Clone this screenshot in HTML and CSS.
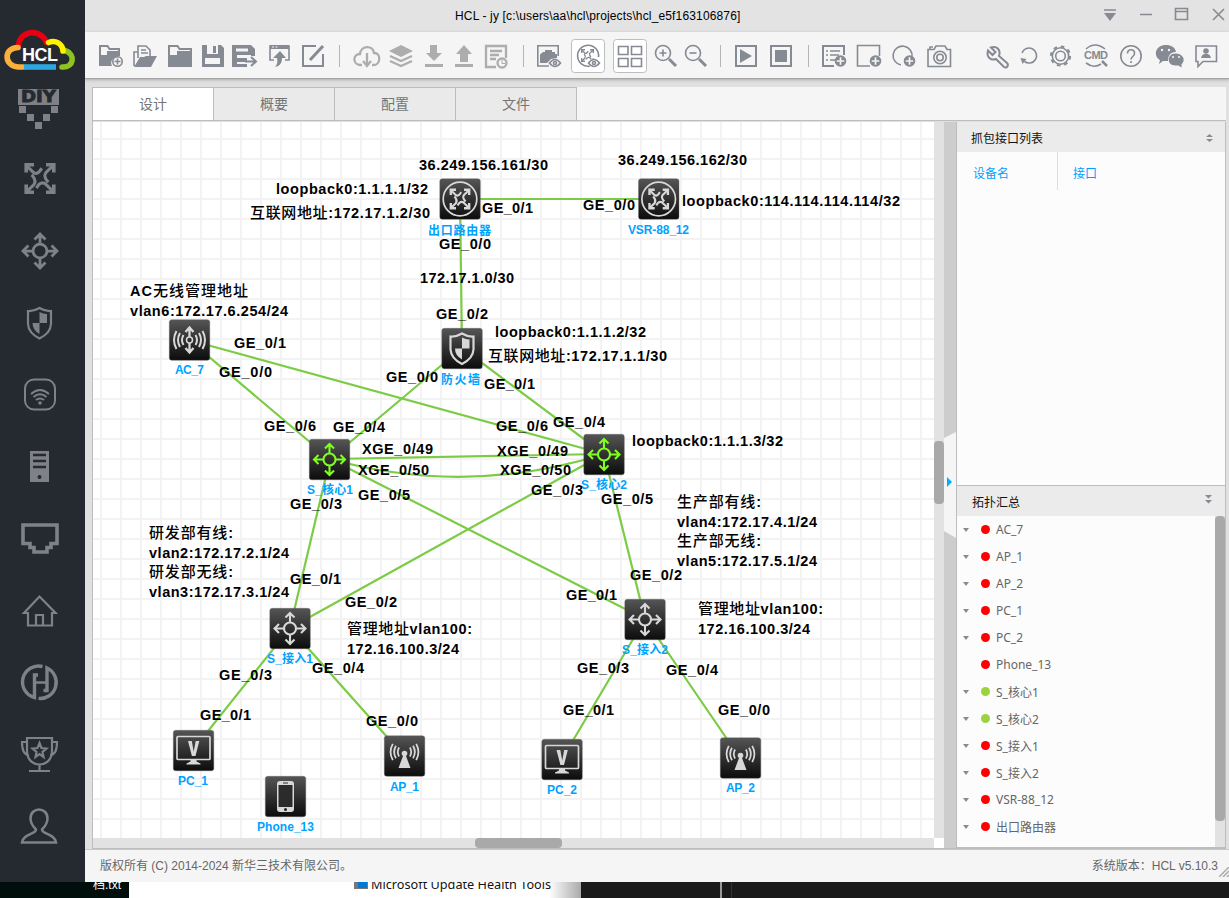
FILE: index.html
```html
<!DOCTYPE html>
<html lang="zh-CN">
<head>
<meta charset="utf-8">
<title>HCL - jy</title>
<link rel="stylesheet" href="styles.css">
</head>
<body>
<div class="screen">
<div class="app">
  <nav class="side">
    <svg class="logo" viewBox="0 0 85 72">
      <g fill="none" stroke-width="5.600" stroke-linecap="round">
        <path d="M62 67c12 1 14-13 3-16.500" stroke="#8fc31f"/>
        <path d="M18.500 45.500c1-15 22-18 28-3" stroke="#e60012"/>
        <path d="M23 67h-5C4 66 3 48 18 47.500" stroke="#fbb03b"/>
        <path d="M24 67h32" stroke="#2ea7e0" stroke-linecap="butt"/>
        <path d="M48.500 42.500c7-3 14 1 14.500 8.500" stroke="#fff100"/>
      </g>
      <text x="22" y="61" class="logo-t" textLength="36">HCL</text>
    </svg>
    <svg class="si" viewBox="0 72 85 72"><path fill="#7f8186" d="M18 89h41v16H18zM19 106h7v7h-7zM51 106h7v7h-7zM27 114h7v7h-7zM43 114h7v7h-7zM35 122h7v7h-7z"/><text class="diy" x="21" y="102" textLength="35" lengthAdjust="spacingAndGlyphs">DIY</text></svg>
    <svg class="si" viewBox="0 144 85 72"><g transform="translate(40 178.500) scale(1.2)"><use class="thick" href="#router"/></g></svg>
    <svg class="si" viewBox="0 216 85 72"><g transform="translate(40 251) scale(1.1)"><use href="#switch2"/></g></svg>
    <svg class="si" viewBox="0 288 85 72"><g transform="translate(39.500 323)"><use href="#shield"/></g></svg>
    <svg class="si" viewBox="0 360 85 72"><g fill="none" stroke="#7f8186" stroke-width="2"><rect x="25" y="379.500" width="30" height="30" rx="9"/><path d="M31 394q9-8 18 0M33.500 397q6.500-5.500 13 0M36 400q4-3 8 0"/></g><circle cx="40" cy="403" r="1.800" fill="#7f8186"/></svg>
    <svg class="si" viewBox="0 432 85 72"><path fill="#7f8186" d="M30 451h19v31H30z"/><path stroke="#252a31" stroke-width="2.300" d="M33 455h13M33 461h13M33 467h13"/><circle cx="39.500" cy="477" r="2" fill="#252a31"/></svg>
    <svg class="si" viewBox="0 504 85 72"><path fill="none" stroke="#7f8186" stroke-width="3.600" d="M23 525h34v18.500h-6v4h-4v4.500H34v-4.500h-4v-4h-7z"/></svg>
    <svg class="si" viewBox="0 576 85 72"><g fill="none" stroke="#7f8186" stroke-width="2.200"><path d="M28 625.500h24V613h3.500L39.500 596.500 24 613h4z"/><path d="M36 625v-10h7v10"/></g></svg>
    <svg class="si" viewBox="0 648 85 72"><g fill="none" stroke="#7f8186" stroke-width="3.400"><path d="M42.500 666.500A16 16 0 0 0 34.500 697.500V675h3.500M38.500 698.400A16 16 0 0 0 47 668V690.500h-3.500"/><path d="M35 682.500h12" stroke-width="2.500"/></g></svg>
    <svg class="si" viewBox="0 720 85 72"><g fill="none" stroke="#7f8186" stroke-width="2.200"><path d="M27 738h25v13c0 18-25 18-25 0zM27 742h-5c0 8 2 13 7 13M52 742h5c0 8-2 13-7 13M39.500 765v5M29 771h21"/><path d="m39.500 743 2 5 5 .5-4 3.500 1 5-4-3-4 3 1-5-4-3.500 5-.5z"/></g></svg>
    <svg class="si" viewBox="0 792 85 72"><path fill="none" stroke="#7f8186" stroke-width="2.500" d="M22 842.500h34c-1-9-14-8-14-13 3-3 5.500-6 5.500-11 0-12-17-12-17 0 0 5 2.500 8 5.500 11 0 5-13 4-14 13z"/></svg>
  </nav>

  <div class="main">
    <header class="title">
      <span class="title-text">HCL - jy [c:\users\aa\hcl\projects\hcl_e5f163106876]</span>
      <svg class="win" viewBox="1099 0 130 32"><g fill="none" stroke="#868a93" stroke-width="1.600"><path d="M1104 10h12M1140 14.500h12M1175.500 8.500h12v11h-12zM1175 11.500h12"/><path d="m1213 9 11 11M1224 9l-11 11"/></g><path fill="#868a93" d="M1104 13h12l-6 8z"/></svg>
    </header>

    <div class="tools">
      <svg width="45" height="46" viewBox="85 32 45 46"><path fill="#868a93" d="M99 45h9l2 3h10v8l-3 1a6 6 0 0 0-5 9H99z"/><path fill="#f5f5f5" d="M101 47h6l2 3h9v1H107v4h-6z"/><circle cx="117.500" cy="61.500" r="4.700" class="o"/><path class="o" d="M114.500 61.500h6M117.500 58.500v6"/></svg>
      <svg width="33" height="46" viewBox="130 32 33 46"><path class="o" d="M138 52h-4v14M138 58V46h8l4 4v7M141 50h5M141 53h7"/><path fill="#868a93" d="M134 67l6-10h4l2-1h11l-6 11z"/></svg>
      <svg width="34" height="46" viewBox="163 32 34 46"><path fill="#868a93" d="M168 45h10l2 3h12v19h-24z"/><path fill="#f5f5f5" d="M170 47h7l2 3h11v1H177v4h-7z"/></svg>
      <svg width="32" height="46" viewBox="197 32 32 46"><path fill="#868a93" d="M202 45h5v9h11v-9h3l3 3v19h-22zM213 46h3v7h-3z"/><path fill="#f5f5f5" d="M205 58h15v6h-15z"/></svg>
      <svg width="34" height="46" viewBox="229 32 34 46"><path fill="#868a93" d="M232 45h19l4 4v7h-4v-1h-14v3h10v4h-10v2h10v3h-15z"/><path fill="#f5f5f5" d="M236 48.500h12v3h-12z"/><path class="o w2" d="M245 61.500h10M251 57l5 4.500-5 4.500"/></svg>
      <svg width="33" height="46" viewBox="263 32 33 46"><path class="o" d="M274 60h-4V46h19v14h-4"/><path fill="#868a93" d="M270 45h19v4h-19zM280 51l6 7h-4c0 5-2 8-7 9 2-2 3-5 2-9h-4z"/><path stroke="#f5f5f5" d="M272 47h2M275.500 47h2"/></svg>
      <svg width="37" height="46" viewBox="296 32 37 46"><path class="o w2" d="M316 46h-13v20h20V54"/><path stroke="#868a93" stroke-width="3" d="M310 60l13-14"/></svg>
      <svg width="14" height="46" viewBox="333 32 14 46"><path class="sep" d="M339.500 45v22"/></svg>
      <svg width="38" height="46" viewBox="347 32 38 46"><g class="dis"><path d="M362 65h-2c-8-1-7-11 0-11 1-9 13-9 14-1 8 0 6 12 0 12h-2M367 53v12M363 61l4 5 4-5"/></g></svg>
      <svg width="34" height="46" viewBox="385 32 34 46"><path fill="#adadad" d="m401 45 12 6-12 6-12-6z"/><path class="dis" d="m390 56 11 5 11-5M390 61l11 5 11-5"/></svg>
      <svg width="30" height="46" viewBox="419 32 30 46"><path fill="#adadad" d="M430 45h7v8h5l-8 8-8-8h4zM425 64h18v3h-18z"/></svg>
      <svg width="30" height="46" viewBox="449 32 30 46"><path fill="#adadad" d="M460 62h8v-8h4l-8-9-8 9h4zM455 64h18v3h-18z"/></svg>
      <svg width="38" height="46" viewBox="479 32 38 46"><path class="dis" d="M496 67h-10V46h20v12M490 51h12M490 55h9M490 59h6"/><circle class="dis" cx="502" cy="63" r="4.500"/><path d="M502 60v3.500h3" fill="none" stroke="#adadad"/></svg>
      <svg width="14" height="46" viewBox="517 32 14 46"><path class="sep" d="M523.500 45v22"/></svg>
      <svg width="39" height="46" viewBox="531 32 39 46"><path class="o" d="M549 66h-11.200V45.800h20.400v10.200"/><path fill="#868a93" d="M540 54.500l3-2.500h2v-2h7v2h3v2h2v4l-6 1-4 4h-7z"/><path class="o" d="M549.500 63q5.500-7 11 0-5.500 7-11 0z"/><circle class="o" cx="555" cy="63" r="1.500"/></svg>
      <svg width="42" height="46" viewBox="570 32 42 46"><rect class="on" x="571.500" y="39.500" width="33" height="33" rx="3"/><path class="o" d="M590 66a10.500 10.500 0 1 1 8.500-9"/><g transform="translate(587.500 55.500) scale(.5)"><use class="gr" href="#router"/></g><path fill="#fff" d="M587 63q7-9 14 0-7 9-14 0z"/><path class="o" d="M588.500 63q5.500-7 11 0-5.500 7-11 0z"/><circle class="o" cx="594" cy="63" r="1.500"/></svg>
      <svg width="40" height="46" viewBox="612 32 40 46"><rect class="on" x="613.500" y="39.500" width="33" height="33" rx="3"/><path class="o" d="M618.500 46.500h9.500v8h-9.500zM631.500 46.500h10v8h-10zM618.500 58.500h9.500v8h-9.500zM631.500 58.500h10v8h-10z"/></svg>
      <svg width="30" height="46" viewBox="652 32 30 46"><circle class="o" cx="663" cy="53" r="7.500"/><path class="o" d="M659.500 53h7M663 49.500v7"/><path stroke="#868a93" stroke-width="3" d="m669 59 7 7"/></svg>
      <svg width="30" height="46" viewBox="682 32 30 46"><circle class="o" cx="693" cy="53" r="7.500"/><path class="o" d="M689.500 53h7"/><path stroke="#868a93" stroke-width="3" d="m699 59 7 7"/></svg>
      <svg width="18" height="46" viewBox="712 32 18 46"><path class="sep" d="M720.500 45v22"/></svg>
      <svg width="34" height="46" viewBox="730 32 34 46"><path class="o w2" d="M736 46h20v20h-20z"/><path fill="#868a93" d="m740 49 12 7-12 7z"/></svg>
      <svg width="34" height="46" viewBox="764 32 34 46"><path class="o w2" d="M771 46h20v20h-20z"/><path fill="#868a93" d="M775 50h12v12h-12z"/></svg>
      <svg width="18" height="46" viewBox="798 32 18 46"><path class="sep" d="M808.500 45v22"/></svg>
      <svg width="36" height="46" viewBox="816 32 36 46"><path class="o w2" d="M834 66h-11V46h21v9"/><path class="o" d="M826 51h2M830 51h10M826 55h2M830 55h9M826 60h2M830 60h5"/><use href="#add" x="840.500" y="61"/></svg>
      <svg width="35" height="46" viewBox="852 32 35 46"><path class="o" d="M870 66h-12.500V45.500h22V56"/><use href="#add" x="875.500" y="61"/></svg>
      <svg width="34" height="46" viewBox="887 32 34 46"><path class="o" d="M901 65a9.500 9.500 0 1 1 11-8"/><use href="#add" x="909.500" y="61"/></svg>
      <svg width="62" height="46" viewBox="921 32 62 46"><path class="o" d="M928 49.500h6l2-3.500h9l2 3.500h3.500v17H928zM930 49v-2h3"/><circle class="o" cx="940" cy="57.500" r="6.200"/><circle class="o" cx="940" cy="57.500" r="3.200"/></svg>
      <svg width="32" height="46" viewBox="983 32 32 46"><path class="o w2" d="m991 47.500 4.500 4.500-3 3-4.500-4.500c-2 6.500 3 10.500 8 8.500l8 8c3 2 5-2 3-4l-8-7c2-6-2-10.500-8-8.500z"/></svg>
      <svg width="30" height="46" viewBox="1015 32 30 46"><path class="o" d="M1022 53a7.500 7.500 0 1 1 2.500 8.500"/><path fill="#868a93" d="m1020.500 58 6 1-4 5z"/></svg>
      <svg width="33" height="46" viewBox="1045 32 33 46"><circle class="o" cx="1060.500" cy="56" r="8.200"/><circle cx="1060.500" cy="56" r="9.600" fill="none" stroke="#868a93" stroke-width="2" stroke-dasharray="3.600 3.940"/><circle class="o" cx="1060.500" cy="56" r="4.800"/></svg>
      <svg width="37" height="46" viewBox="1078 32 37 46"><path class="o" d="M1086 49q9-8 19 0M1086 63q8 6 15 1"/><path stroke="#868a93" stroke-width="2.500" d="m1102 61 5 5"/><text class="cmd" x="1084" y="59" textLength="24">CMD</text></svg>
      <svg width="35" height="46" viewBox="1115 32 35 46"><circle class="o" cx="1131" cy="56" r="10.200"/><path class="o" d="M1127.500 53.500c0-5 7.500-5 7 0 0 3-3.500 3-3.500 6M1131 61v2"/></svg>
      <svg width="40" height="46" viewBox="1150 32 40 46"><path fill="#868a93" d="M1166 45c-11 0-13 11-6 15l-1 4 4-3h5c0-8 5-9 8-9-1-5-5-7-10-7z"/><path fill="#868a93" d="M1175.500 53.500c-9 0-9 12 0 12h3l3 2v-3c5-5 1-11-6-11z"/><g fill="#f5f5f5"><circle cx="1162" cy="50" r="1.200"/><circle cx="1169" cy="50" r="1.200"/><circle cx="1173" cy="57" r="1"/><circle cx="1179" cy="57" r="1"/></g></svg>
      <svg width="39" height="46" viewBox="1190 32 39 46"><path class="o" d="M1196 46h20.500v15.500H1203l-5 5v-5h-2z"/><circle cx="1206" cy="51" r="2.800" fill="#868a93"/><path fill="#868a93" d="M1201 58q1-4 4-4h2q3 0 4 4z"/></svg>
    </div>

    <div class="work">
      <div class="tabs"><div class="tab act">设计</div><div class="tab">概要</div><div class="tab">配置</div><div class="tab">文件</div></div>
      <div class="panes">
        <div class="stage">
          <div class="stage-row">
          <svg class="topo" width="841" height="716" viewBox="93 122 841 716">
            <defs>
              <pattern id="grid" x="100" y="138" width="20" height="20" patternUnits="userSpaceOnUse"><path d="M0 0h20v2H0z" fill="#f3f3f3"/><path d="M0 0h2v20H0z" fill="#f3f3f3"/></pattern>
              <linearGradient id="dark" x2="0" y2="1"><stop offset="0" stop-color="#555"/><stop offset=".5" stop-color="#303030"/><stop offset="1" stop-color="#0c0c0c"/></linearGradient>
              <rect id="tile" x="-20.200" y="-20.200" width="40.500" height="40.500" rx="2.500" fill="url(#dark)" stroke="#666" stroke-width=".4"/>
              <g id="router" fill="none" stroke="currentColor" stroke-width="2.600"><path d="M-11-10.500l5 5q3 3 6-1l1.500-2M11-11l-5 5q-4 3 0 8l1 1M11 11l-5-5q-3-4-7-1l-2 3M-11 11l6-6q2-3-1-7l-1-1"/><path d="M-11.500-5v-6.500h6.500M5-11.500h6.500v6.500M11.500 5v6.500H5M-5 11.500h-6.500V5" stroke-width="3"/></g>
              <g id="switch" fill="none" stroke="currentColor" stroke-width="2.100"><circle r="6"/><path d="M0-6v-9M0 6v9M-6 0h-9M6 0h9M-4.500-11 0-15.500 4.500-11M-4.500 11 0 15.500 4.500 11M-11-4.500-15.500 0-11 4.500M11-4.500 15.500 0 11 4.500"/></g>
              <g id="switch2" fill="none" stroke="currentColor" stroke-width="2.500"><circle r="6.300"/><path d="M0-6v-9M0 6v9M-6 0h-9M6 0h9M-5-10.500 0-15.500 5-10.500M-5 10.500 0 15.500 5 10.500M-10.500-5-15.500 0-10.500 5M10.500-5 15.500 0 10.500 5"/></g>
              <g id="shield"><path d="M0-15q6 3.500 11.500 3V1Q11 10 0 15.500-11 10-11.500 1v-13Q-6-11.500 0-15z" fill="none" stroke="currentColor" stroke-width="2.200"/><path d="M0-11q5 2.500 7.500 2V0H0zM0 0v11q-7-4-7-11z" fill="currentColor"/></g>
              <g id="waves" fill="none" stroke="currentColor" stroke-width="2"><path d="M-6-5q-3 5 0 10M-9.500-7q-4 7 0 14M-13-9q-5 9 0 18M6-5q3 5 0 10M9.500-7q4 7 0 14M13-9q5 9 0 18"/></g>
              <g id="n-router" color="#d8d8d8"><use href="#tile"/><circle r="16.800" fill="none" stroke="#d8d8d8" stroke-width="1.700"/><g transform="scale(.8)"><use href="#router"/></g></g>
              <g id="n-switch"><use href="#tile"/><use href="#switch"/></g>
              <g id="n-ap" color="#d8d8d8"><use href="#tile"/><g transform="translate(0 -4) scale(.9)"><use href="#waves"/></g><circle cy="-2.500" r="2.800" fill="#d8d8d8"/><path fill="#d8d8d8" d="M-1.500 0h3l4.500 12H-6z"/></g>
              <g id="n-pc" color="#d8d8d8"><use href="#tile"/><rect x="-16.500" y="-14" width="33" height="23" rx="1" fill="none" stroke="#d8d8d8" stroke-width="1.700"/><path fill="#d8d8d8" d="M-5.500-9.500h3.800L.2 1 2.200-9.500h3.600L2 5.500h-3.600zM-3 9h6v2l4 2v1H-7v-1l4-2z"/></g>
              <g id="add"><circle r="5.800" fill="#868a93"/><path d="M-3.800 0h7.600M0-3.800v7.600" stroke="#f5f5f5" stroke-width="1.700"/></g>
            </defs>
            <path fill="#fff" d="M93 122h841v716H93z"/><path fill="url(#grid)" d="M93 122h841v716H93z"/>
            <g class="link">
              <path d="M460 199H659M460 199L462 348M189 340L330 459M189 340L604 454M462 348L330 459M462 348L604 454M330 459L604 454M330 459Q467 497 604 454M330 459L645 619M604 454L290 628M330 459L290 628M604 454L645 619M290 628L193 750M290 628L404 756M645 619L562 759M645 619L740 758"/>
            </g>
            <use href="#n-router" x="460" y="199"/><use href="#n-router" x="658.700" y="199"/>
            <g color="#d8d8d8"><use href="#tile" x="189.500" y="340"/><g transform="translate(189.500 340)"><use href="#waves"/><path d="M0-12v9M0 3v9M-4-8 0-12.500 4-8M-4 8 0 12.500 4 8" fill="none" stroke="#d8d8d8" stroke-width="2.300"/><circle r="3" fill="none" stroke="#d8d8d8" stroke-width="1.500"/></g>
            <use href="#tile" x="462" y="348.500"/><use href="#shield" x="462" y="348.500"/>
            <use href="#n-switch" x="290" y="628.500"/><use href="#n-switch" x="645" y="619.500"/></g>
            <g color="#7fff1e"><use href="#n-switch" x="329.500" y="459.500"/><use href="#n-switch" x="604" y="454.500"/></g>
            <use href="#n-pc" x="193.500" y="750.500"/><use href="#n-pc" x="562" y="759.500"/>
            <use href="#n-ap" x="404.500" y="756"/><use href="#n-ap" x="740.500" y="758"/>
            <use href="#tile" x="285.500" y="796.500"/><rect x="277" y="781" width="17" height="31" rx="3" fill="#d8d8d8"/><path fill="#2b2b2b" d="M278.500 785h14v22h-14zM283 782.500h5v1h-5z"/><circle cx="285.500" cy="809.500" r="1.500" fill="#222"/>
            <g class="nm">
              <text x="428" y="234.500" textLength="63">出口路由器</text><text x="628" y="234" textLength="61">VSR-88_12</text><text x="175" y="374" textLength="29">AC_7</text><text x="441" y="384" textLength="39">防火墙</text><text x="307" y="494" textLength="46">S_核心1</text><text x="581" y="489" textLength="46">S_核心2</text><text x="267" y="663" textLength="46">S_接入1</text><text x="622" y="654" textLength="46">S_接入2</text><text x="178" y="785" textLength="30">PC_1</text><text x="390" y="791" textLength="29">AP_1</text><text x="257" y="831" textLength="57">Phone_13</text><text x="547" y="794" textLength="30">PC_2</text><text x="726" y="792" textLength="29">AP_2</text>
            </g>
            <g class="lb">
              <text x="419" y="170" textLength="129">36.249.156.161/30</text><text x="618" y="165" textLength="129">36.249.156.162/30</text>
              <text x="276" y="194" textLength="152">loopback0:1.1.1.1/32</text><text x="250" y="218" textLength="180"><tspan>互联网地址</tspan>:172.17.1.2/30</text>
              <text x="682" y="206" textLength="218">loopback0:114.114.114.114/32</text>
              <text x="482" y="213" textLength="51">GE_0/1</text><text x="583" y="210" textLength="52">GE_0/0</text><text x="439" y="249" textLength="52">GE_0/0</text>
              <text x="420" y="283" textLength="94">172.17.1.0/30</text><text x="436" y="319" textLength="52">GE_0/2</text>
              <text x="495" y="337" textLength="151">loopback0:1.1.1.2/32</text><text x="488" y="361" textLength="179"><tspan>互联网地址</tspan>:172.17.1.1/30</text>
              <text x="130" y="296" textLength="118">AC<tspan>无线管理地址</tspan></text><text x="130" y="316" textLength="158">vlan6:172.17.6.254/24</text>
              <text x="234" y="348" textLength="52">GE_0/1</text><text x="219" y="377" textLength="53">GE_0/0</text><text x="386" y="382" textLength="52">GE_0/0</text><text x="484" y="389" textLength="51">GE_0/1</text>
              <text x="264" y="431" textLength="52">GE_0/6</text><text x="333" y="432" textLength="52">GE_0/4</text><text x="362" y="454" textLength="71">XGE_0/49</text><text x="358" y="475" textLength="71">XGE_0/50</text><text x="358" y="500" textLength="52">GE_0/5</text><text x="290" y="509" textLength="52">GE_0/3</text>
              <text x="149" y="538" textLength="84"><tspan>研发部有线</tspan>:</text><text x="149" y="558" textLength="140">vlan2:172.17.2.1/24</text><text x="149" y="577" textLength="84"><tspan>研发部无线</tspan>:</text><text x="149" y="597" textLength="140">vlan3:172.17.3.1/24</text>
              <text x="290" y="584" textLength="51">GE_0/1</text><text x="345" y="607" textLength="52">GE_0/2</text>
              <text x="496" y="431" textLength="52">GE_0/6</text><text x="553" y="427" textLength="52">GE_0/4</text><text x="497" y="456" textLength="71">XGE_0/49</text><text x="500" y="475" textLength="71">XGE_0/50</text><text x="531" y="495" textLength="52">GE_0/3</text><text x="601" y="504" textLength="52">GE_0/5</text>
              <text x="632" y="446" textLength="151">loopback0:1.1.1.3/32</text>
              <text x="677" y="507" textLength="84"><tspan>生产部有线</tspan>:</text><text x="677" y="527" textLength="140">vlan4:172.17.4.1/24</text><text x="677" y="546" textLength="84"><tspan>生产部无线</tspan>:</text><text x="677" y="566" textLength="140">vlan5:172.17.5.1/24</text>
              <text x="630" y="580" textLength="52">GE_0/2</text><text x="566" y="600" textLength="51">GE_0/1</text>
              <text x="698" y="614" textLength="125"><tspan>管理地址</tspan>vlan100:</text><text x="698" y="634" textLength="112">172.16.100.3/24</text>
              <text x="347" y="634" textLength="125"><tspan>管理地址</tspan>vlan100:</text><text x="347" y="654" textLength="112">172.16.100.3/24</text>
              <text x="219" y="680" textLength="53">GE_0/3</text><text x="312" y="673" textLength="52">GE_0/4</text><text x="200" y="720" textLength="51">GE_0/1</text><text x="366" y="726" textLength="52">GE_0/0</text><text x="577" y="673" textLength="52">GE_0/3</text><text x="666" y="675" textLength="52">GE_0/4</text><text x="563" y="715" textLength="51">GE_0/1</text><text x="718" y="715" textLength="52">GE_0/0</text>
            </g>
          </svg>
          <div class="vbar"><div class="vthumb"></div></div>
          </div>
          <div class="hrow"><div class="hbar"><div class="hthumb"></div></div></div>
        </div>
        <div class="split"><svg width="12" height="106" viewBox="0 0 12 106"><path fill="#f5f5f5" d="M0 6 12 0v106L0 99z"/><path fill="#00aeff" d="m3 45 5 5-5 5z"/></svg></div>
        <aside class="right">
          <div class="ph"><span>抓包接口列表</span><svg width="9" height="10" viewBox="0 0 9 10"><path fill="#868a93" d="M1 4l3.500-3L8 4zM1 6l3.500 3L8 6z"/></svg></div>
          <div class="cols"><div class="c1">设备名</div><div class="c2">接口</div></div>
          <div class="ph ph2"><span>拓扑汇总</span><svg width="9" height="10" viewBox="0 0 9 10"><path fill="#868a93" d="M1 1h7L4.500 4.500zM1 6h7L4.500 9.500z"/></svg></div>
          <div class="sum">
            <div class="list">
              <div class="row"><i class="ar"></i><i class="dot"></i>AC_7</div>
              <div class="row"><i class="ar"></i><i class="dot"></i>AP_1</div>
              <div class="row"><i class="ar"></i><i class="dot"></i>AP_2</div>
              <div class="row"><i class="ar"></i><i class="dot"></i>PC_1</div>
              <div class="row"><i class="ar"></i><i class="dot"></i>PC_2</div>
              <div class="row"><i class="ar hid"></i><i class="dot"></i>Phone_13</div>
              <div class="row"><i class="ar"></i><i class="dot up"></i>S_核心1</div>
              <div class="row"><i class="ar"></i><i class="dot up"></i>S_核心2</div>
              <div class="row"><i class="ar"></i><i class="dot"></i>S_接入1</div>
              <div class="row"><i class="ar"></i><i class="dot"></i>S_接入2</div>
              <div class="row"><i class="ar"></i><i class="dot"></i>VSR-88_12</div>
              <div class="row"><i class="ar"></i><i class="dot"></i>出口路由器</div>
            </div>
            <div class="lbar"><div class="lthumb"></div></div>
          </div>
        </aside>
      </div>
    </div>
    <footer class="status"><span>版权所有 (C) 2014-2024 新华三技术有限公司。</span><span class="ver">系统版本：HCL v5.10.3</span><svg class="grip" width="10" height="10" viewBox="0 0 10 10"><path stroke="#aaa" stroke-width="1.500" d="M0 10 10 0M4 10l6-6M8 10l2-2"/></svg></footer>
  </div>
</div>
<div class="desk"><div class="d1"><span>档.txt</span></div><div class="d2"><i class="pic"></i><span>Microsoft Update Health Tools</span></div><div class="d3"><i></i><b></b></div></div>
</div>
</body>
</html>
```
FILE: styles.css
```css
* { box-sizing: border-box; }
body { margin: 0; overflow: hidden; font-family: "Liberation Sans", "Noto Sans CJK SC", sans-serif; font-size: 12px; }
svg { display: block; flex: none; }
.screen { width: 1229px; height: 898px; overflow: hidden; display: flex; flex-direction: column; }
.app { height: 882px; display: flex; }
.side { width: 85px; background: #252a31; color: #7f8186; position: relative; z-index: 1; }
.side svg { width: 85px; height: 72px; }
.logo-t { font: bold 18px "Liberation Sans", sans-serif; fill: #fff; }
.diy { font: 900 15px "DejaVu Sans", sans-serif; fill: #252a31; stroke: #252a31; stroke-width: .8; }
.main { flex: 1; display: flex; flex-direction: column; min-width: 0; background: #e0e0e0; }
.title { height: 32px; background: #e3e3e3; display: flex; justify-content: flex-end; }
.title-text { width: 644px; font-size: 12px; letter-spacing: .15px; line-height: 32px; color: #000; white-space: nowrap; }
.win { width: 130px; height: 32px; }
.tools { height: 47px; background: #f5f5f5; border-bottom: 1px solid #a5a5a5; box-shadow: 0 1px 3px #aaa; display: flex; }
.o { fill: none; stroke: #868a93; stroke-width: 1.6; }
.w2 { stroke-width: 2; }
.dis { fill: none; stroke: #adadad; stroke-width: 2.3; }
.sep { stroke: #b5b5b5; stroke-width: 1; }
.on { fill: #fff; stroke: #bdbdbd; }
.gr { color: #868a93; }
.cmd { font: bold 11px "Liberation Sans", sans-serif; fill: #868a93; }
.work { height: 770px; padding: 8px 3px 0 7px; }
.tabs { height: 34px; display: flex; background: #f5f5f5; border-bottom: 1px solid #bdbdbd; }
.tab { width: 121px; height: 33px; border: solid #bdbdbd; border-width: 1px 1px 0 0; background: #eaeaea; text-align: center; line-height: 33px; font-size: 14px; color: #757575; }
.tab.act { background: #fff; border-left-width: 1px; width: 122px; }
.panes { height: 728px; display: flex; border-left: 1px solid #bdbdbd; border-bottom: 1px solid #bdbdbd; padding-top: 1px; }
.stage { width: 851px; }
.stage-row { display: flex; height: 716px; }
.vbar { width: 10px; height: 716px; background: #e2e2e2; padding-top: 319px; }
.vthumb { height: 63px; border-radius: 4px; background: #a9a9a9; }
.hrow { height: 10px; background: #fff; }
.hbar { width: 841px; height: 10px; background: #e2e2e2; padding-left: 382px; }
.hthumb { width: 87px; height: 10px; border-radius: 4px; background: #a9a9a9; }
.split { width: 12px; background: #cdcdcd; padding-top: 310px; }
.right { width: 270px; background: #fcfcfc; border: 1px solid #bdbdbd; border-top: 0; }
.ph { height: 30px; background: #ebebeb; display: flex; justify-content: space-between; align-items: center; padding: 1px 11px 0 14px; color: #111; }
.cols { height: 333px; display: flex; color: #00a0ff; }
.c1 { width: 101px; height: 38px; border-right: 1px solid #ddd; padding-left: 16px; line-height: 44px; }
.c2 { padding-left: 15px; line-height: 44px; }
.ph2 { border-top: 1px solid #bdbdbd; height: 31px; padding-left: 15px; padding-right: 12px; }
.ph2 svg { margin-top: -5px; }
.sum { display: flex; justify-content: space-between; height: 331px; font-family: "Noto Sans", "Noto Sans CJK SC", sans-serif; color: #666; }
.row { height: 27px; display: flex; align-items: center; padding-left: 6px; white-space: nowrap; }
.ar { border: 3.5px solid transparent; border-top: 4px solid #868a93; border-bottom: 0; margin-right: 12px; }
.hid { visibility: hidden; }
.dot { width: 9px; height: 9px; border-radius: 50%; background: #f00; margin-right: 6px; }
.up { background: #9bd33f; }
.lbar { width: 10px; background: #e2e2e2; }
.lthumb { height: 305px; border-radius: 4px; background: #a9a9a9; }
.status { height: 33px; background: #f5f5f5; border-top: 1px solid #c8c8c8; display: flex; line-height: 32px; padding-left: 15px; color: #666; position: relative; font-size: 12px; }
.ver { margin-left: auto; margin-right: 11px; }
.grip { position: absolute; right: 0; bottom: 5px; }
.link { fill: none; stroke: #7ccb45; stroke-width: 2.2; }
.nm { font: bold 12px "Liberation Sans", "Noto Sans CJK SC", sans-serif; fill: #00a2ff; }
.lb { font: bold 14.5px "Liberation Sans", "Noto Sans CJK SC", sans-serif; fill: #000; }
.lb tspan { font-size: 15px; font-weight: 500; }
.desk { height: 16px; display: flex; overflow: hidden; background: #1a1a1a; }
.desk span { display: block; white-space: nowrap; line-height: 18px; margin-top: -6px; }
.d1 { width: 129px; background: #000f0c; color: #fff; padding-left: 93px; }
.d2 { width: 452px; background: linear-gradient(90deg, #fff 420px, #aaa); display: flex; padding-left: 225px; font: 12.7px "Noto Sans", sans-serif; color: #111; }
.pic { width: 14px; height: 7px; background: #0078d4; border: solid #777; border-width: 0 1px 1px 4px; margin-right: 3px; }
.d2 span { margin-top: -7px; }
.d3 { display: flex; padding-left: 139px; }
.d3 i { width: 2px; background: #999; }
.d3 b { width: 1px; margin-left: 9px; background: #333; }
```
